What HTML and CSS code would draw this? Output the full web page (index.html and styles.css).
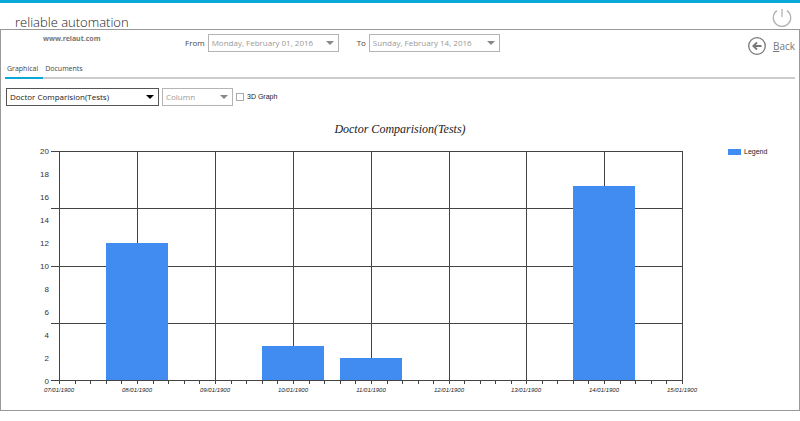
FILE: index.html
```
<!DOCTYPE html>
<html lang="en">
<head>
    <meta charset="utf-8">
    <title>reliable automation</title>
    <link rel="stylesheet" href="styles.css">
</head>
<body>
    <header class="header">
        <h1 class="brand">reliable automation</h1>
        <button class="icon-button" type="button" aria-label="Power">
            <svg width="20" height="20" viewBox="0 0 20 20">
                <path d="M5 2.6A8.7 8.7 0 1 0 15 2.6M10 1v8" fill="none" stroke="#b4b4b4" stroke-width="1.3"/>
            </svg>
        </button>
    </header>

    <main class="panel">
        <div class="toolbar">
            <div class="site">www.relaut.com</div>
            <div class="range">
                <label for="from">From</label>
                <span class="dropdown date">
                    <select id="from" disabled><option>Monday, February 01, 2016</option></select>
                </span>
                <label class="to" for="to">To</label>
                <span class="dropdown date">
                    <select id="to" disabled><option>Sunday, February 14, 2016</option></select>
                </span>
            </div>
            <a class="back" href="#">
                <svg width="18" height="18" viewBox="0 0 18 18">
                    <circle cx="9" cy="9" r="8.3" fill="none" stroke="#777" stroke-width="1.3"/>
                    <path d="M13.5 9H6M9 5.5L5.3 9L9 12.5" fill="none" stroke="#777" stroke-width="1.8"/>
                </svg>
                <span><u>B</u>ack</span>
            </a>
        </div>

        <nav class="tabs">
            <a class="active" href="#">Graphical</a>
            <a href="#">Documents</a>
        </nav>

        <div class="filters">
            <span class="dropdown report">
                <select aria-label="Report"><option>Doctor Comparision(Tests)</option></select>
            </span>
            <span class="dropdown kind">
                <select aria-label="Chart type" disabled><option>Column</option></select>
            </span>
            <input type="checkbox" id="graph3d">
            <label class="check-label" for="graph3d">3D Graph</label>
        </div>

        <h2 class="title">Doctor Comparision(Tests)</h2>

        <div class="chart">
            <svg class="plot" viewBox="0 0 700 256">
                <!-- grid -->
                <path class="line" d="M50 11.5H682M50 68.5H682M50 126.5H682M50 183.5H682M50 240.5H682"/>
                <path class="line" d="M58.5 11V244M136.5 11V244M214.5 11V244M292.5 11V244M370.5 11V244M448.5 11V244M525.5 11V244M603.5 11V244M681.5 11V244"/>
                <!-- small ticks -->
                <path class="line" d="M74.5 241v3M89.5 241v3M105.5 241v3M120.5 241v3M152.5 241v3M167.5 241v3M183.5 241v3M198.5 241v3M230.5 241v3M245.5 241v3M261.5 241v3M276.5 241v3M308.5 241v3M323.5 241v3M339.5 241v3M354.5 241v3M386.5 241v3M401.5 241v3M417.5 241v3M432.5 241v3M463.5 241v3M479.5 241v3M494.5 241v3M510.5 241v3M541.5 241v3M556.5 241v3M572.5 241v3M587.5 241v3M619.5 241v3M634.5 241v3M650.5 241v3M665.5 241v3"/>
                <g class="bars">
                    <rect x="105" y="103" width="62" height="137"/>
                    <rect x="261" y="206" width="62" height="34"/>
                    <rect x="339" y="218" width="62" height="22"/>
                    <rect x="572" y="46" width="62" height="194"/>
                </g>
                <g class="y-labels">
                    <text x="48" y="14">20</text>
                    <text x="48" y="37">18</text>
                    <text x="48" y="60">16</text>
                    <text x="48" y="83">14</text>
                    <text x="48" y="106">12</text>
                    <text x="48" y="129">10</text>
                    <text x="48" y="152">8</text>
                    <text x="48" y="175">6</text>
                    <text x="48" y="198">4</text>
                    <text x="48" y="221">2</text>
                    <text x="48" y="244">0</text>
                </g>
                <g class="x-labels">
                    <text x="58" y="252">07/01/1900</text>
                    <text x="136" y="252">08/01/1900</text>
                    <text x="214" y="252">09/01/1900</text>
                    <text x="292" y="252">10/01/1900</text>
                    <text x="370" y="252">11/01/1900</text>
                    <text x="448" y="252">12/01/1900</text>
                    <text x="525" y="252">13/01/1900</text>
                    <text x="603" y="252">14/01/1900</text>
                    <text x="681" y="252">15/01/1900</text>
                </g>
            </svg>
            <div class="legend"><span class="swatch"></span>Legend</div>
        </div>
    </main>
</body>
</html>
```
FILE: styles.css
```
* { box-sizing: border-box; }
body { margin: 0; background: #fff; color: #444; font: 8px/12px "Open Sans", "Noto Sans", sans-serif; }
a { color: inherit; text-decoration: none; }

.header { display: flex; justify-content: space-between; height: 29px; padding: 5px 8px 0 15px; border-top: 3px solid #08a9d9; }
.brand { margin: 0; padding-top: 5px; font-size: 13px; line-height: 18px; font-weight: 300; color: #222; }
.icon-button { width: 20px; height: 20px; padding: 0; border: 0; background: none; cursor: pointer; }

.panel { border: 1px solid #999; padding-bottom: 14px; }

.toolbar { display: flex; align-items: flex-start; height: 32px; padding: 4px 4px 0 42px; }
.site { width: 142px; font: bold 7px/10px "Noto Sans", sans-serif; color: #777; }
.range { display: flex; align-items: center; gap: 3px; }
.range .to { margin-left: 15px; }
.back { display: flex; align-items: center; gap: 7px; margin-left: auto; padding-top: 3px; font-size: 10px; color: #777; }
.back svg { display: block; }

.dropdown { position: relative; display: block; }
.dropdown select { display: block; width: 100%; height: 18px; padding: 0 3px; border: 1px solid #555; border-radius: 0; background: #fff; color: #222; font: inherit; appearance: none; opacity: 1; }
.dropdown select:disabled { border-color: #b4b4b4; color: #999; }
.dropdown::after { content: ""; position: absolute; right: 5px; top: 7px; border: 4px solid transparent; border-top-color: #000; border-bottom: 0; pointer-events: none; }
.dropdown:has(:disabled)::after { border-top-color: #888; }
.date { width: 131px; }
.report { width: 153px; }
.kind { width: 71px; }

.tabs { display: flex; margin: 0 4px; border-bottom: 2px solid #ccc; font-size: 7px; }
.tabs a { height: 17px; margin-bottom: -2px; padding: 1px 5px 0 2px; }
.tabs .active { border-bottom: 2px solid #08a9d9; }

.filters { display: flex; align-items: center; gap: 3px; margin-top: 9px; padding-left: 5px; }
.filters input { width: 8px; height: 8px; margin: 0; border: 1px solid #aaa; background: #fff; appearance: none; }
.check-label { font: 7px/10px "Liberation Sans", sans-serif; color: #222; }

.title { margin: 15px 0 3px; font: italic 12px/16px "Liberation Serif", serif; color: #222; text-align: center; }

.chart { display: flex; align-items: flex-start; }
.plot { flex: 1; min-width: 0; }
.line { fill: none; stroke: #444; stroke-width: 1px; }
.bars { fill: #418cf0; }
.y-labels { font: 8px "Liberation Sans", sans-serif; fill: #333; text-anchor: end; }
.x-labels { font: italic 6px "Liberation Sans", sans-serif; fill: #222; text-anchor: middle; }
.legend { display: flex; align-items: center; gap: 3px; width: 98px; padding: 7px 0 0 27px; font: 7px/10px "Liberation Sans", sans-serif; color: #222; }
.swatch { width: 13px; height: 6px; background: #418cf0; }
```
